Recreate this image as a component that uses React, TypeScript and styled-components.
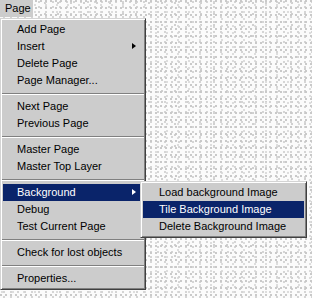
import React from "react";
import styled, { createGlobalStyle } from "styled-components";

const Global = createGlobalStyle`
  html, body { margin: 0; padding: 0; }
  body {
    font-family: "Liberation Sans", Arial, sans-serif;
    font-size: 11px;
  }
`;

const Desktop = styled.div`
  position: relative;
  width: 312px;
  height: 298px;
  overflow: hidden;
  background-color: #fbfbfb;
  background-image:
    radial-gradient(circle at 1px 1px, #c8c8c8 0.7px, transparent 1px),
    radial-gradient(circle at 4px 2px, #d4d4d4 0.7px, transparent 1px),
    radial-gradient(circle at 2px 5px, #dcdcdc 0.7px, transparent 1px),
    radial-gradient(circle at 6px 3px, #cfcfcf 0.7px, transparent 1px);
  background-size: 5px 7px, 7px 5px, 11px 7px, 13px 11px;
`;

const MenuBar = styled.div`
  display: flex;
  height: 18px;
`;

const BarItem = styled.div`
  width: 33px;
  height: 17px;
  background: #cccccc;
  color: #000;
  line-height: 17px;
  padding-left: 5px;
  box-sizing: border-box;
`;

const MenuBox = styled.div<{ $width: number }>`
  position: relative;
  width: ${(p) => p.$width}px;
  box-sizing: border-box;
  background: #cccccc;
  border-style: solid;
  border-width: 1px;
  border-color: #d4d4d4 #404040 #404040 #d4d4d4;
  box-shadow: inset 1px 1px 0 #ffffff, inset -1px -1px 0 #808080;
  padding: 2px;
  display: flex;
  flex-direction: column;
`;

const SubMenu = styled(MenuBox)`
  position: absolute;
  left: 137px;
  top: -3px;
  z-index: 2;
`;

const Item = styled.div<{ $active?: boolean; $indent: number }>`
  position: relative;
  height: 17px;
  line-height: 17px;
  padding-left: ${(p) => p.$indent}px;
  color: ${(p) => (p.$active ? "#ffffff" : "#000000")};
  background: ${(p) => (p.$active ? "#0a246a" : "transparent")};
  white-space: nowrap;
`;

const Arrow = styled.span<{ $active?: boolean }>`
  position: absolute;
  right: 7px;
  top: 5px;
  width: 0;
  height: 0;
  border-top: 3.5px solid transparent;
  border-bottom: 3.5px solid transparent;
  border-left: 4px solid ${(p) => (p.$active ? "#ffffff" : "#000000")};
`;

const Separator = styled.div`
  height: 9px;
  margin: 0 -1px;
  display: flex;
  flex-direction: column;
  justify-content: center;
  &::before {
    content: "";
    display: block;
    height: 1px;
    background: #808080;
  }
  &::after {
    content: "";
    display: block;
    height: 1px;
    background: #ffffff;
  }
`;

type Entry = { label: string; sub?: boolean; active?: boolean } | "sep";

const mainItems: Entry[] = [
  { label: "Add Page" },
  { label: "Insert", sub: true },
  { label: "Delete Page" },
  { label: "Page Manager..." },
  "sep",
  { label: "Next Page" },
  { label: "Previous Page" },
  "sep",
  { label: "Master Page" },
  { label: "Master Top Layer" },
  "sep",
  { label: "Background", sub: true, active: true },
  { label: "Debug" },
  { label: "Test Current Page" },
  "sep",
  { label: "Check for lost objects" },
  "sep",
  { label: "Properties..." },
];

const subItems = [
  { label: "Load background Image" },
  { label: "Tile Background Image", active: true },
  { label: "Delete Background Image" },
];

export default function App() {
  return (
    <>
      <Global />
      <Desktop>
        <MenuBar>
          <BarItem>Page</BarItem>
        </MenuBar>
        <MenuBox $width={146}>
          {mainItems.map((e, i) =>
            e === "sep" ? (
              <Separator key={i} />
            ) : (
              <Item key={i} $active={e.active} $indent={14}>
                {e.label}
                {e.sub && <Arrow $active={e.active} />}
                {e.label === "Background" && (
                  <SubMenu $width={167}>
                    {subItems.map((s) => (
                      <Item key={s.label} $active={s.active} $indent={16}>
                        {s.label}
                      </Item>
                    ))}
                  </SubMenu>
                )}
              </Item>
            )
          )}
        </MenuBox>
      </Desktop>
    </>
  );
}
